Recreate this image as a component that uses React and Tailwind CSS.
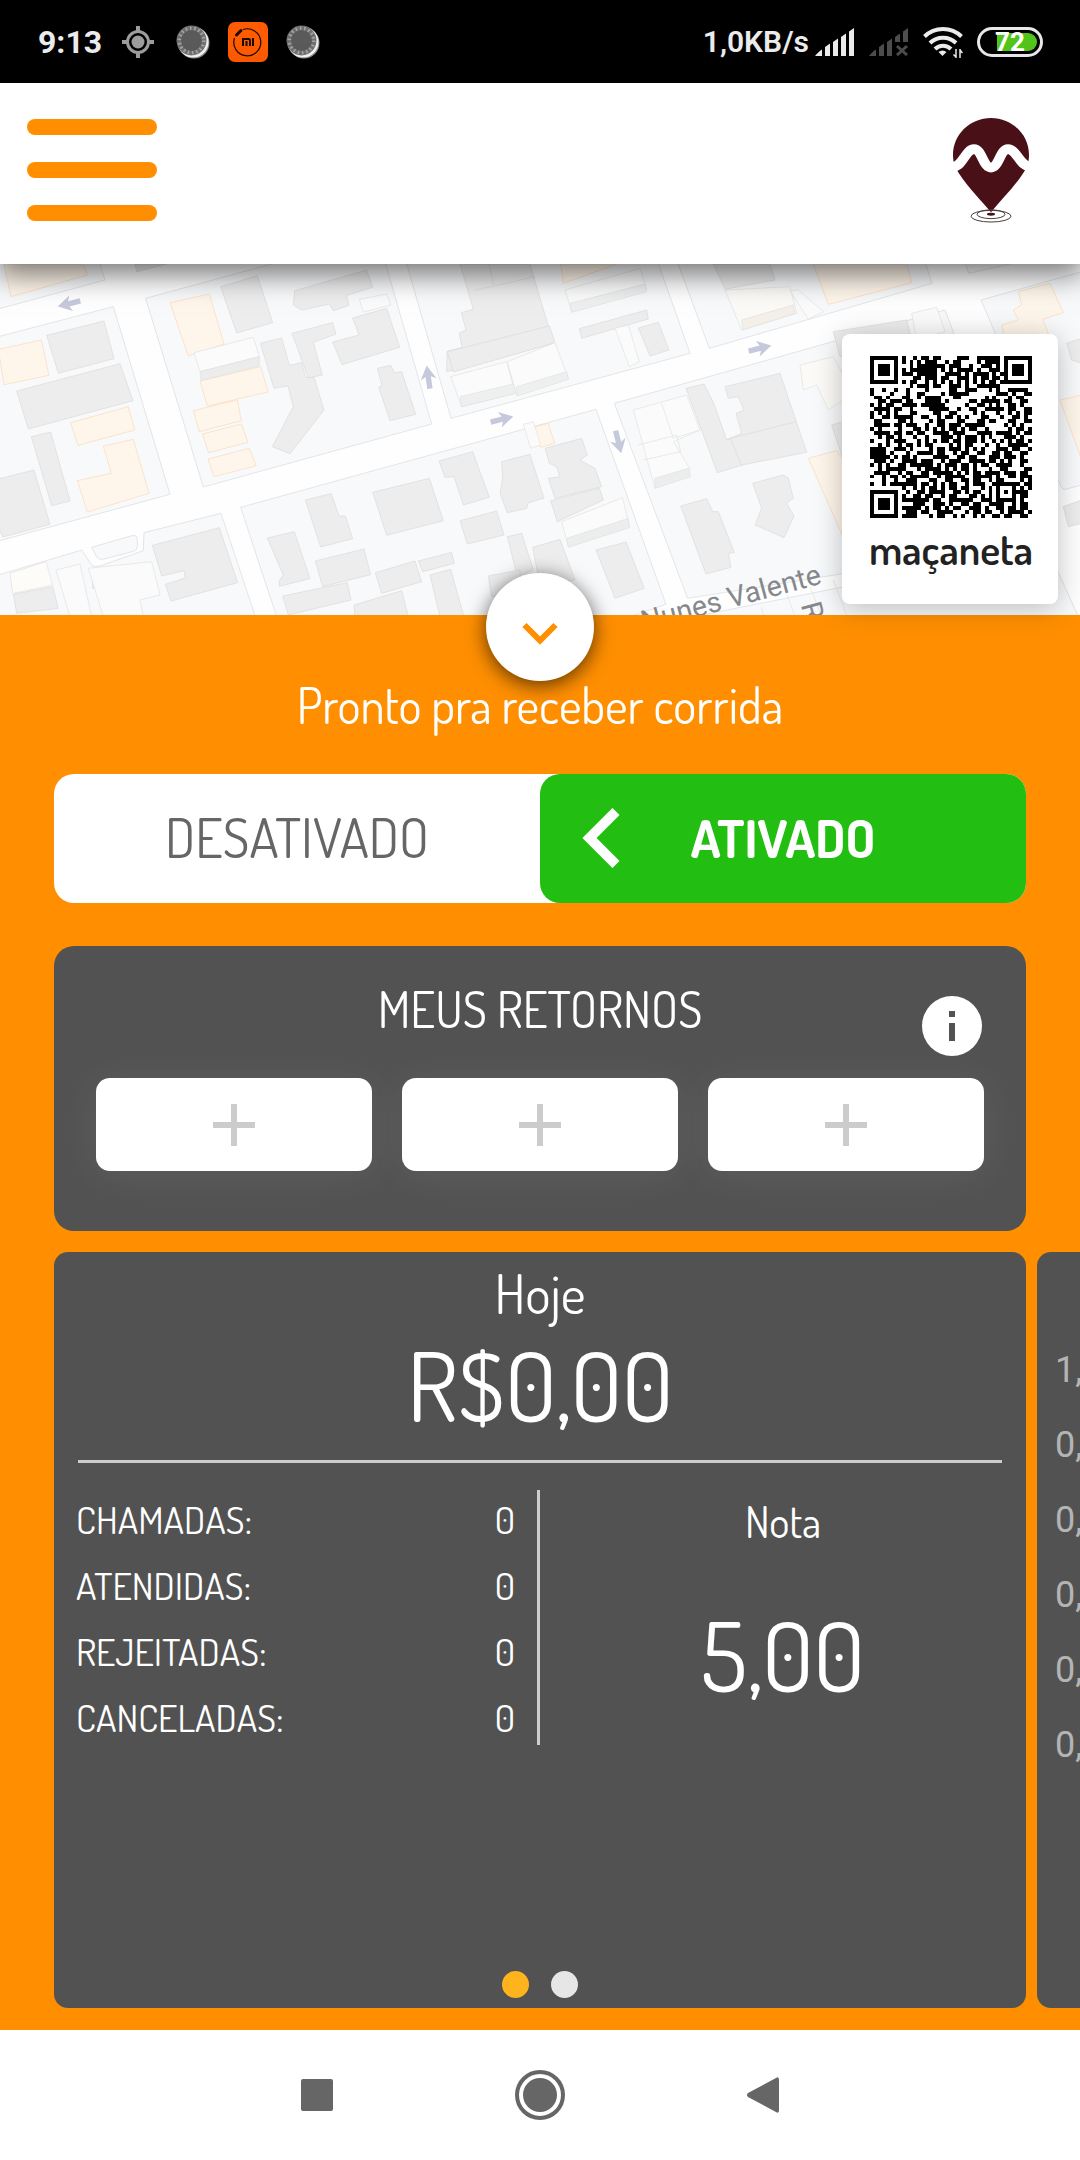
import React from "react";

const resumo = [
  { rotulo: "CHAMADAS:", valor: 0 },
  { rotulo: "ATENDIDAS:", valor: 0 },
  { rotulo: "REJEITADAS:", valor: 0 },
  { rotulo: "CANCELADAS:", valor: 0 },
];

const proximos = ["1,00", "0,00", "0,00", "0,00", "0,00", "0,00"];

// módulos do QR code, uma linha por string
const qrLinhas = [
  "........#..#.##.##....###..######..#.....",
  "........#.#.#.###..#.##....#.####.##.....",
  "..........#.#######.###..#..###.#.##.....",
  "........#.#######.#.#.####.#..###..#.....",
  "........###.#####..####.#.####.#.###.....",
  "...........##.###.##..###.#.##.##........",
  "........#.##..#.#.#.#.#.#.#.#.##.#.......",
  "..........#.###.##..###.#..######........",
  "#..#..#..#....#.....##..###...#.#..#####.",
  "#....#...#..##....#.#####.......###.#..##",
  ".##.#...##..#.####...##......#.#...#.##..",
  "..##.###.##...####.#.....##.#####.##..##.",
  "#.#.##..####.######.....#..##.#.#..##.#..",
  ".####.##..#....#####..#..##..#####.##..##",
  "#.#.#.#...##....##..##....#.#...#..#.#.##",
  "#..##.#####..##..#.##.#.#...##...#..##.#.",
  ".##....##.#....#.##...##...##.##...##..##",
  ".####.##.###..#..##.###.#####.....#.#.#..",
  "#.#....#...##.#.#.#.##.#.##..#.....#.##.#",
  ".####.##.##.##..####.###...####.####.#.##",
  "..#.##.#...#..#...###.#.###.#.#...###.#..",
  "#...#.###...#.#.#.##.##.###.#..#.#.#.##.#",
  "..#.#..#.##.#.##....#.#.##...#..#..#####.",
  "####..###.#....#.##.###.#.#.#...###.##..#",
  "####.#...#..####.##..#.##..##..##.##..##.",
  "#####.#.##.#....####..##.##...###.###.#..",
  ".###.#..####.###..#.###..####.##.#.#..##.",
  "#.#.#..##.######.#.###.##.#.##..####..#..",
  "..#.#####...#.####.#.#.##.#...#..##....##",
  ".####..#.##..##.#####.#.#.##.####.###.##.",
  "#..#.##.#.#####..#.#####..#####.#..##.###",
  "...#..#..###...##..##..##.##..#.##....#.#",
  "#..#.#######.##.#.#.##..#.###..#######.##",
  "........#..#.#.##.#.##.##...#.#.#...#.#.#",
  ".........#..##.####..##.#.##..#.#.#.####.",
  "........#..##.##..#.##...##.#.#.#...#.##.",
  "........#######.##..######..###.#####.#..",
  "...........###..###.#..##.##..####..#.##.",
  "........#####.#.##.#.##..###.#..##.##.##.",
  ".........###.##..####...#.##.##..#.####.#",
  "........####...#.##..#.#..#.#..##.##..##.",
];

const cantosQr = [
  [0, 0],
  [34, 0],
  [0, 34],
];

function IconeGps() {
  return (
    <svg className="w-8 h-8" viewBox="0 0 32 32" fill="none" stroke="#9d9d9d" strokeWidth="4">
      <circle cx="16" cy="16" r="10.5" strokeWidth="3" />
      <circle cx="16" cy="16" r="6.5" fill="#9d9d9d" stroke="none" />
      <path d="M16 0v6M16 26v6M0 16h6M26 16h6" />
    </svg>
  );
}

function IconeBola() {
  return (
    <svg className="w-[34px] h-[34px]" viewBox="0 0 34 34">
      <circle cx="18" cy="18" r="15.5" fill="#8a8a8a" />
      <circle cx="17" cy="17" r="15.5" fill="#f1f1f1" />
      <circle cx="15.5" cy="15.5" r="15" fill="#6f6f6f" />
      <circle cx="15.5" cy="15.5" r="12" fill="none" stroke="#a5a5a5" strokeWidth="4" strokeDasharray="1.5 2.7" />
      <circle cx="15.5" cy="15.5" r="10.5" fill="#5a5a5a" />
    </svg>
  );
}

function IconeMi() {
  return (
    <svg className="w-10 h-10" viewBox="0 0 40 40" fill="none" stroke="#1a0a00">
      <rect width="40" height="40" rx="7" fill="#ff5b00" stroke="none" />
      <path d="M15 7.5a13.500 13.500 0 1 1-8.500 8.500" strokeWidth="1.200" />
      <path d="M8.500 13l4.500-4.500" strokeWidth="3" strokeLinecap="round" />
      <path d="M15 24v-7h5.500q1.500 0 1.500 1.500V24M18.500 19v5M25 16v8" strokeWidth="2" />
    </svg>
  );
}

function Sinal({ semChip }) {
  return (
    <svg className="w-10 h-7" viewBox="0 0 40 28" fill={semChip ? "#4d4d4d" : "#ececec"}>
      <path d="M0 28q4-5 7-6.500V28zM10 19l5-3.500V28h-5zM18 14l5-3.500V28h-5z" />
      {semChip ? (
        <>
          <path d="M26 9l5-3.500V14h-5zM34 3.500L39 0v14h-5z" />
          <path d="M28 18l10 9M38 18l-10 9" stroke="#4d4d4d" strokeWidth="3" />
        </>
      ) : (
        <path d="M26 9l5-3.500V28h-5zM34 3.500L39 0v28h-5z" />
      )}
    </svg>
  );
}

function IconeWifi() {
  return (
    <svg className="w-10 h-8" viewBox="0 0 40 32" fill="none" stroke="#ececec" strokeWidth="4">
      <path d="M1.500 10.500a26.500 26.500 0 0 1 37 0" />
      <path d="M7 17a18.500 18.500 0 0 1 26 0" />
      <path d="M12 23a11.500 11.500 0 0 1 16 0" />
      <path d="M15.500 26a6 6 0 0 1 8 0l-4 4z" fill="#ececec" stroke="none" />
      <path d="M33 23v9M30.500 28.500L33 31M37 32v-9M39.500 27L37 24" strokeWidth="1.500" />
    </svg>
  );
}

function Bateria() {
  return (
    <div className="relative w-[66px] h-[30px] rounded-full border-3 border-[#e8e8e8] p-[3px]">
      <div className="ml-[14px] h-full rounded-r-full bg-[#52c41a]" />
      <span className="absolute inset-0 text-center text-[26px] leading-[24px] font-bold text-white">72</span>
    </div>
  );
}

function BarraStatus() {
  return (
    <div className="h-[83px] bg-black text-[#ececec] flex items-center justify-between pl-[38px] pr-[37px]">
      <div className="flex items-center">
        <span className="text-[32px] font-bold mr-[20px]">9:13</span>
        <IconeGps />
        <div className="flex items-center gap-[18px] ml-[22px]">
          <IconeBola />
          <IconeMi />
          <IconeBola />
        </div>
      </div>
      <div className="flex items-center gap-[14px]">
        <div className="flex items-center gap-[6px]">
          <span className="text-[30px] font-semibold">1,0KB/s</span>
          <Sinal />
        </div>
        <Sinal semChip />
        <IconeWifi />
        <Bateria />
      </div>
    </div>
  );
}

function Logo() {
  return (
    <svg className="w-[76px] h-[105px]" viewBox="0 0 76 108" preserveAspectRatio="none">
      <path
        d="M38 0C17 0 0 17 0 38c0 8 2 13 6 19 10 16 22 27 32 40 10-13 22-24 32-40 4-6 6-11 6-19C76 17 59 0 38 0z"
        fill="#4a1018"
      />
      <path
        d="M-2 50C9 53 12 32 21 32c8 0 9 19 17 19s9-19 17-19c9 0 12 19 23 18"
        fill="none"
        stroke="#fff"
        strokeWidth="10"
      />
      <g fill="none" stroke="#4a3a3c" strokeWidth="1">
        <ellipse cx="38" cy="101" rx="20" ry="6" />
        <ellipse cx="38" cy="99" rx="14" ry="4.500" />
      </g>
      <ellipse cx="38" cy="99" rx="4" ry="1.500" fill="#4a1018" />
    </svg>
  );
}

function Cabecalho() {
  return (
    <header className="relative z-10 h-[181px] bg-white flex items-center justify-between pl-[27px] pr-[51px] pb-[7px] shadow-[0_6px_28px_4px_rgba(0,0,0,0.55)]">
      <button type="button" aria-label="Abrir menu" className="w-[130px] flex flex-col gap-[27px]">
        <span className="h-[16px] rounded-full bg-[#ff8f00]" />
        <span className="h-[16px] rounded-full bg-[#ff8f00]" />
        <span className="h-[16px] rounded-full bg-[#ff8f00]" />
      </button>
      <Logo />
    </header>
  );
}

function Seta({ x, y, giro }) {
  return (
    <path
      transform={`translate(${x} ${y}) rotate(${giro})`}
      d="M-34-8H2l-8-16L36 0-6 24l8-16h-36z"
      fill="#c6c8dc"
    />
  );
}

function Mapa() {
  return (
    <svg className="block w-full h-full" viewBox="0 12 3240 1053" preserveAspectRatio="xMidYMid slice">
      <rect y="12" width="3240" height="1053" fill="#fefefe" />

      {/* quadras */}
      <g fill="#f8f9fb" stroke="#e3e5e8" strokeWidth="3">
        <path d="M-5 5H298L315 60-5 147z" />
        <path d="M-5 230L340 140 510 703-5 843z" />
        <path d="M437 115L840 5H1155L1295 492 610 681z" />
        <path d="M1218 5L1353 475 2070 280 1973 5z" />
        <path d="M2032 5L2128 265 2796 70 2775 5z" />
        <path d="M2895 5L2906 40 3060 5z" />
        <path d="M722 742L1788 448 1998 1033 1890 1070H830z" />
        <path d="M-5 945L245 870 275 915q10 8 25 3l130-46 2-54L663 760 766 1070H-5z" />
        <path d="M275 862L400 826q12 0 12 14v20q0 10-12 14l-92 24q-12 2-18-8z" />
        <path d="M1843 430L2835 150 3100 850 2063 1015z" />
        <path d="M2943 120L3245 35V675L3195 688q-8 0-12-8z" />
        <path d="M2080 1070L3140 860 3235 1070z" />
      </g>

      {/* edifícios */}
      <g fill="#ededed" stroke="#d9d9d9" strokeWidth="2">
        <path d="M140 226L312 183 342 296 175 340z" />
        <path d="M50 393L360 311 399 422 85 507z" />
        <path d="M94 530L152 516 210 723 155 737z" />
        <path d="M-5 657L102 630 150 793 8 831-5 800z" />
        <path d="M405 12L500 12 410 35z" />
        <path d="M662 80L772 47 818 188 710 219z" />
        <path d="M884 92L1100 30 1118 82 1040 106 1047 136 1000 152 988 132 905 150 880 135z" />
        <path d="M1058 174L1160 145 1199 262 1026 314 998 246 1077 225z" />
        <path d="M781 250L845 234 868 316 904 308 917 352 942 352 972 450 870 581 817 560 880 440 864 378 822 385z" />
        <path d="M876 220L998 188 1008 222 940 247 967 345 925 354z" />
        <path d="M1132 325L1172 316 1184 338 1205 335 1247 463 1170 482 1136 382 1146 376z" />
        <path d="M457 856L658 803 713 968 513 1023 496 973 556 954 552 932 485 948z" />
        <path d="M916 720L994 701 1017 768 1036 768 1058 836 962 861z" />
        <path d="M1118 697L1288 655 1330 782 1160 826z" />
        <path d="M802 834L883 815 930 956 838 979 838 962 850 945z" />
        <path d="M946 903L1092 867 1112 944 968 980z" />
        <path d="M848 1008L1042 968 1053 1020 865 1065z" />
        <path d="M1126 938L1245 903 1265 965 1145 1000z" />
        <path d="M1255 903L1355 877 1363 910 1268 935z" />
        <path d="M1062 1035L1205 992 1225 1070H1065z" />
        <path d="M1290 945L1352 928 1392 1070H1320z" />
        <path d="M40 1003L158 980 175 1045 50 1060z" />
        <path d="M278 962L325 950 335 982 278 985z" />
        <path d="M1380 12L1590 12 1660 250 1340 335 1341 274 1387 262 1377 220 1398 210 1384 158 1420 148z" />
        <path d="M1342 275L1648 198 1665 248 1360 336z" />
        <path d="M1420 92L1605 50M1468 12L1480 75" fill="none" />
        <path d="M1738 206L1940 150 1945 177 1745 235z" />
        <path d="M1915 204L1975 187 2007 270 1950 288z" />
        <path d="M2140 12H2310L2325 60 2175 88z" />
        <path d="M2058 385L2112 372 2142 432 2180 540 2200 532 2228 615 2152 638z" />
        <path d="M2175 380L2340 340 2420 577 2225 615 2190 535 2225 520 2208 460 2232 450 2215 410 2185 415z" />
        <path d="M2180 538L2388 485" fill="none" />
        <path d="M2258 670L2350 645 2365 655 2380 715 2360 730 2382 768 2352 833 2265 795 2285 745z" />
        <path d="M2042 738L2120 716 2138 755 2155 755 2203 877 2185 880 2193 922 2118 942z" />
        <path d="M1317 603L1418 575 1468 712 1390 735 1362 650 1335 652z" />
        <path d="M1380 782L1490 753 1512 825 1402 852z" />
        <path d="M1505 605L1590 583 1632 715 1585 728 1580 745 1522 758 1500 700 1508 655z" />
        <path d="M1635 565L1745 535 1762 585 1740 600 1785 625 1805 680 1665 715 1645 655 1680 650 1670 620 1648 610z" />
        <path d="M1652 722L1798 685 1810 720 1672 785z" />
        <path d="M1788 870L1878 846 1933 985 1845 1015z" />
        <path d="M1522 830L1565 820 1600 930 1552 950z" />
        <path d="M1598 862L1680 838 1725 960 1620 975z" />
        <path d="M1465 948L1560 930 1560 1000 1475 1010z" />
        <path d="M2500 215L2720 180 2740 260 2520 290z" />
        <path d="M2495 495L2530 485 2530 600z" />
        <path d="M3200 250L3245 235V310L3215 300z" />
        <path d="M3190 740L3245 720V790L3205 800z" />
      </g>

      <g fill="#fff6eb" stroke="#fbe3cb" strokeWidth="3">
        <path d="M12 12H250L262 45 33 110z" />
        <path d="M-5 268L124 240 147 346 12 374z" />
        <path d="M510 128L628 102 672 252 565 288z" />
        <path d="M600 363L782 320 804 396 622 438z" />
        <path d="M580 452L712 420 724 482 598 515z" />
        <path d="M607 522L724 492 744 547 626 578z" />
        <path d="M624 597L748 565 768 617 642 650z" />
        <path d="M212 488L385 440 404 510 234 556z" />
        <path d="M310 558L400 538 447 700 262 756 232 662 334 640z" />
        <path d="M1682 12H1850L1690 70z" />
        <path d="M1600 502L1645 490 1664 550 1622 562z" />
        <path d="M2440 12H2720L2735 68 2485 133z" />
        <path d="M2425 595L2510 572 2560 640V900z" />
        <path d="M3055 95L3150 70 3190 158 3128 178 3160 260 3030 290 3005 195 3055 180 3040 150 3065 135z" />
        <path d="M3180 420L3245 405V600z" />
      </g>

      {/* edifícios em relevo */}
      <g fill="#fafbfa" stroke="#dfe1e0" strokeWidth="2">
        <path d="M582 278L760 232 778 290 600 335z" />
        <path d="M600 335L778 290 778 318 603 362z" fill="#ebeceb" />
        <path d="M1078 118L1160 102 1172 135 1090 156z" />
        <path d="M1352 350L1520 305 1545 400 1385 440z" />
        <path d="M1380 410L1540 372 1548 400 1385 440z" fill="#eef0ef" />
        <path d="M1522 305L1665 248 1705 355 1550 405z" />
        <path d="M1550 380L1700 335 1705 358 1552 408z" fill="#eef0ef" />
        <path d="M1695 90L1920 25 1940 90 1715 155z" />
        <path d="M1710 130L1935 72 1940 95 1715 157z" fill="#eef0ef" />
        <path d="M1845 205L1885 195 1918 305 1888 320z" />
        <path d="M1570 493L1600 485 1622 555 1592 565z" />
        <path d="M1900 450L2060 405 2100 510 2020 545 2072 630 1965 685z" />
        <path d="M1965 655L2065 625 2072 650 1965 685z" fill="#eceeed" />
        <path d="M1985 430L2020 535 2100 510" fill="none" />
        <path d="M1915 555L2030 525 2042 575 1930 600" fill="none" />
        <path d="M1685 785L1868 713 1888 800 1705 860z" />
        <path d="M1700 835L1885 775 1888 803 1705 862z" fill="#eceeed" />
        <path d="M2175 90L2370 80 2390 160 2225 210z" fill="#fcfaf7" />
        <path d="M2225 180L2380 135 2385 160 2228 210z" fill="#f5efea" />
        <path d="M2370 92L2395 90 2470 155 2425 177z" />
        <path d="M2400 315L2500 290 2560 400 2485 450 2450 375 2410 390z" fill="#fcfaf7" />
        <path d="M2735 160L2810 142 2835 215 2750 240z" />
        <path d="M30 940L138 905 158 975 38 1000z" fill="#fefcf9" />
        <path d="M168 930L240 912 275 1070H210z" />
        <path d="M265 925L455 905 480 1005 420 1020 430 1070H310z" />
        <path d="M2290 1070L2285 1040M2360 1000L2385 1070M2430 980L2465 1070M2500 960L2540 1065" fill="none" />
      </g>

      <Seta x={208} y={131} giro={166} />
      <Seta x={1285} y={352} giro={-98} />
      <Seta x={1505} y={478} giro={-14} />
      <Seta x={1855} y={545} giro={76} />
      <Seta x={2279} y={265} giro={-14} />

      <g fill="#85888c" fontFamily="Roboto, sans-serif" fontSize="86">
        <text transform="translate(2468 970) rotate(-15)" textAnchor="end">
          Nunes Valente
        </text>
        <text transform="translate(2402 1034) rotate(75)">R</text>
      </g>
    </svg>
  );
}

function QrCode() {
  return (
    <svg className="w-[162px] h-[162px]" viewBox="0 0 41 41" shapeRendering="crispEdges" role="img" aria-label="QR code">
      {qrLinhas.map((linha, y) =>
        linha.split("").map((m, x) => m === "#" && <rect key={`${x}-${y}`} x={x} y={y} width="1" height="1" />)
      )}
      {cantosQr.map(([x, y]) => (
        <g key={`${x}-${y}`}>
          <rect x={x} y={y} width="7" height="7" />
          <rect x={x + 1} y={y + 1} width="5" height="5" fill="#fff" />
          <rect x={x + 2} y={y + 2} width="3" height="3" />
        </g>
      ))}
    </svg>
  );
}

function CartaoQr() {
  return (
    <div className="absolute z-20 top-[70px] right-[22px] w-[216px] h-[270px] rounded-lg bg-white pt-[22px] pl-[2px] flex flex-col items-center shadow-[0_4px_28px_rgba(0,0,0,0.25)]">
      <QrCode />
      <span className="mt-[4px] text-[42px] leading-[54px] font-semibold text-[#222222]">maçaneta</span>
    </div>
  );
}

function Alternador() {
  return (
    <div className="h-[129px] grid grid-cols-2 rounded-[20px] bg-white">
      <button type="button" className="pb-[2px] text-[54px] text-[#666666]">
        DESATIVADO
      </button>
      <button type="button" className="relative pb-[2px] rounded-[20px] bg-[#22bf12] text-[52px] font-bold text-white">
        <svg
          className="absolute left-[42px] top-[34px] w-[38px] h-[60px]"
          viewBox="0 0 38 60"
          fill="none"
          stroke="#fff"
          strokeWidth="10"
        >
          <path d="M34 3.500L7.500 30 34 56.500" />
        </svg>
        ATIVADO
      </button>
    </div>
  );
}

function MeusRetornos() {
  return (
    <section className="relative mt-[43px] h-[285px] rounded-[20px] bg-[#525252] px-[42px] pt-[33px]">
      <h2 className="text-center text-[49px] leading-[60px] text-white">MEUS RETORNOS</h2>
      <button
        type="button"
        aria-label="Informações"
        className="absolute right-[44px] top-[50px] w-[60px] h-[60px] rounded-full bg-white flex items-center justify-center"
      >
        <svg className="w-[6px] h-[30px]" viewBox="0 0 6 30" fill="#525252">
          <path d="M0 0h6v6H0zM0 12h6v18H0z" />
        </svg>
      </button>
      <div className="mt-[39px] grid grid-cols-3 gap-[30px]">
        {[1, 2, 3].map((n) => (
          <button
            key={n}
            type="button"
            aria-label={`Adicionar retorno ${n}`}
            className="h-[93px] rounded-[14px] bg-white flex items-center justify-center shadow-[0_4px_40px_rgba(255,255,255,0.08)]"
          >
            <svg className="w-[42px] h-[42px]" viewBox="0 0 42 42" stroke="#cccccc" strokeWidth="6">
              <path d="M21 0v42M0 21h42" />
            </svg>
          </button>
        ))}
      </div>
    </section>
  );
}

function CartaoHoje() {
  return (
    <section className="w-[calc(100%-54px)] shrink-0 rounded-[14px] bg-[#525252] px-[22px] pb-[10px] flex flex-col text-white">
      <h2 className="mt-[8px] text-center text-[54px] leading-[66px]">Hoje</h2>
      <p className="mt-[2px] text-center text-[96px] leading-[112px]">R$0,00</p>
      <hr className="mt-[20px] mx-[2px] border-0 h-[3px] bg-[#cccccc]" />
      <div className="mt-[27px] grid grid-cols-2">
        <dl className="h-[255px] border-r-3 border-[#cccccc] pr-[22px] flex flex-col gap-[8px] text-[38px] leading-[58px]">
          {resumo.map((item) => (
            <div key={item.rotulo} className="flex justify-between">
              <dt>{item.rotulo}</dt>
              <dd>{item.valor}</dd>
            </div>
          ))}
        </dl>
        <div className="pl-[22px] text-center">
          <p className="text-[43px] leading-[62px]">Nota</p>
          <p className="mt-[46px] text-[96px] leading-[112px]">5,00</p>
        </div>
      </div>
      <div className="mt-auto flex justify-center gap-[22px]">
        <button type="button" aria-label="Página 1" className="w-[27px] h-[27px] rounded-full bg-[#ffb41e]" />
        <button type="button" aria-label="Página 2" className="w-[27px] h-[27px] rounded-full bg-[#e6e6e6]" />
      </div>
    </section>
  );
}

function Navegacao() {
  return (
    <nav className="h-[130px] bg-white flex items-center justify-center gap-[182px]">
      <button type="button" aria-label="Recentes" className="w-[32px] h-[32px] rounded-xs bg-[#666666]" />
      <button type="button" aria-label="Início">
        <svg className="w-[50px] h-[50px]" viewBox="0 0 50 50" fill="#666666">
          <circle cx="25" cy="25" r="23" fill="none" stroke="#666666" strokeWidth="4" />
          <circle cx="25" cy="25" r="17" />
        </svg>
      </button>
      <button type="button" aria-label="Voltar">
        <svg className="w-[32px] h-[36px]" viewBox="0 0 32 36" fill="#666666">
          <path d="M29 1q3-2 3 2v30q0 4-3 2L1 20q-2-2 0-4z" />
        </svg>
      </button>
    </nav>
  );
}

export default function App() {
  return (
    <div className="min-h-screen flex flex-col overflow-hidden bg-[#ff8f00] font-['Roboto',sans-serif]">
      <BarraStatus />
      <Cabecalho />

      <div className="relative h-[351px] font-['Dosis','Lato',sans-serif]">
        <Mapa />
        <CartaoQr />
        <button
          type="button"
          aria-label="Recolher painel"
          className="absolute z-20 left-1/2 -translate-x-1/2 -bottom-[66px] w-[108px] h-[108px] rounded-full bg-white flex items-center justify-center shadow-[0_4px_20px_rgba(0,0,0,0.65)]"
        >
          <svg className="mt-[14px] w-[36px] h-[24px]" viewBox="0 0 36 24" fill="none" stroke="#ff8f00" strokeWidth="6">
            <path d="M2.500 3L18 18.500 33.500 3" />
          </svg>
        </button>
      </div>

      <main className="flex-1 flex flex-col pb-[22px] font-['Dosis','Lato',sans-serif]">
        <div className="px-[54px]">
          <p className="pt-[60px] pb-[39px] text-center text-[49px] leading-[60px] text-white">
            Pronto pra receber corrida
          </p>
          <Alternador />
          <MeusRetornos />
        </div>

        <div className="mt-[21px] flex-1 pl-[54px] flex gap-[11px]">
          <CartaoHoje />
          <section className="w-[calc(100%-54px)] shrink-0 rounded-[14px] bg-[#525252] pl-[18px] pt-[81px] font-['Roboto',sans-serif] text-[36px] leading-[75px] text-[#b4b4b4]">
            {proximos.map((valor, i) => (
              <p key={i}>{valor}</p>
            ))}
          </section>
        </div>
      </main>

      <Navegacao />
    </div>
  );
}
